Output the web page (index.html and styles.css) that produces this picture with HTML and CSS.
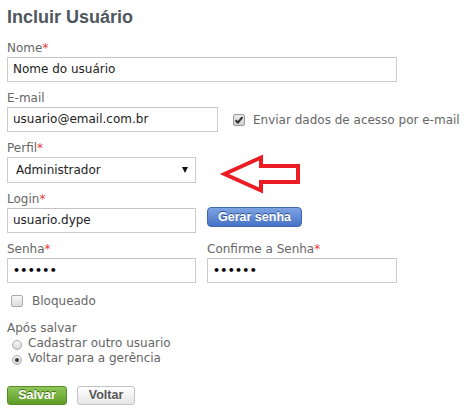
FILE: index.html
```html
<!DOCTYPE html>
<html lang="pt-BR">
<head>
<meta charset="utf-8">
<title>Incluir Usuário</title>
<link rel="stylesheet" href="styles.css">
</head>
<body>
<div class="page">
  <h1 class="title">Incluir Usuário</h1>

  <div class="group">
    <label class="lbl">Nome<span class="req">*</span></label>
    <div class="input w-full">Nome do usuário</div>
  </div>

  <div class="group">
    <label class="lbl">E-mail</label>
    <div class="row">
      <div class="input w-email">usuario@email.com.br</div>
      <label class="check check-email">
        <span class="box checked"><svg viewBox="0 0 12 12" width="12" height="12"><path d="M2.6 6.2 L4.9 8.6 L9.4 3.2" fill="none" stroke="#2b2b2b" stroke-width="2"/></svg></span>
        <span class="check-text">Enviar dados de acesso por e-mail</span>
      </label>
    </div>
  </div>

  <div class="group">
    <label class="lbl">Perfil<span class="req">*</span></label>
    <div class="select w-half">
      <span>Administrador</span>
      <span class="caret"></span>
    </div>
  </div>

  <div class="group">
    <label class="lbl">Login<span class="req">*</span></label>
    <div class="row top">
      <div class="input w-half">usuario.dype</div>
      <button class="btn btn-blue gen">Gerar senha</button>
    </div>
  </div>

  <div class="group row top">
    <div class="col">
      <label class="lbl">Senha<span class="req">*</span></label>
      <div class="input w-half dots">••••••</div>
    </div>
    <div class="col col-right">
      <label class="lbl">Confirme a Senha<span class="req">*</span></label>
      <div class="input w-half2 dots">••••••</div>
    </div>
  </div>

  <label class="check check-block">
    <span class="box"></span>
    <span class="check-text">Bloqueado</span>
  </label>

  <div class="after">
    <div class="after-title">Após salvar</div>
    <label class="radio"><span class="dot"></span><span>Cadastrar outro usuario</span></label>
    <label class="radio"><span class="dot on"></span><span>Voltar para a gerência</span></label>
  </div>

  <div class="actions">
    <button class="btn btn-green">Salvar</button>
    <button class="btn btn-light">Voltar</button>
  </div>

  <svg class="arrow" width="90" height="50" viewBox="215 150 90 50">
    <polygon points="224.5,174 261,157.5 261,166 298,166 298,182 261,182 261,190.5" fill="none" stroke="#ec1c24" stroke-width="4" stroke-linejoin="miter"/>
  </svg>
</div>
</body>
</html>
```

FILE: styles.css
```css
html, body {
  margin: 0;
  padding: 0;
  background: #fff;
}

body {
  font-family: "DejaVu Sans", Verdana, sans-serif;
  font-size: 12px;
  color: #666;
}

.page {
  position: relative;
  padding: 6px 7px;
}

.title {
  margin: 0 0 11px;
  font-family: "Liberation Sans", Arial, sans-serif;
  font-weight: bold;
  font-size: 18px;
  line-height: 22px;
  color: #4f5760;
}

.group {
  margin-bottom: 7px;
}

.lbl {
  display: block;
  line-height: 18px;
  color: #666;
}

.req {
  color: #ee3b3b;
}

.row {
  display: flex;
  align-items: center;
}

.row.top {
  align-items: flex-start;
}

.input {
  box-sizing: border-box;
  height: 25px;
  line-height: 23px;
  border: 1px solid #cccccc;
  border-top-color: #c4c4c4;
  padding: 0 5px;
  color: #222;
  background: #fff;
  white-space: nowrap;
}

.w-full { width: 390px; }
.w-email { width: 211px; }
.w-half { width: 189px; }
.w-half2 { width: 190px; }

.dots {
  font-size: 11px;
  font-weight: bold;
  letter-spacing: 0.3px;
  color: #000;
}

.select {
  box-sizing: border-box;
  height: 26px;
  border: 1px solid #cccccc;
  padding: 0 7px 0 8px;
  display: flex;
  align-items: center;
  justify-content: space-between;
  color: #222;
}

.caret {
  width: 0;
  height: 0;
  border-left: 3.5px solid transparent;
  border-right: 3.5px solid transparent;
  border-top: 6px solid #111;
}

.col-right {
  margin-left: 11px;
}

.check {
  display: flex;
  align-items: center;
  line-height: 18px;
  color: #666;
}

.check-email {
  margin-left: 15px;
}

.check-email .check-text {
  margin-left: 8px;
}

.box {
  box-sizing: border-box;
  width: 12px;
  height: 12px;
  border: 1px solid #a9a9a9;
  border-radius: 2px;
  background: linear-gradient(#f7f7f7, #dcdcdc);
  display: flex;
}

.box svg {
  margin: -1px;
}

.box.checked {
  background: linear-gradient(#ececec, #cfcfcf);
  border-color: #9a9a9a;
}

.check-block {
  margin: 9px 0 0 4px;
}

.check-block .check-text {
  margin-left: 9px;
}

.after {
  margin-top: 11px;
  line-height: 15px;
}

.after-title {
  color: #666;
}

.radio {
  display: flex;
  align-items: center;
  padding-left: 5px;
  color: #666;
}

.dot {
  box-sizing: border-box;
  width: 10px;
  height: 10px;
  margin: 2px 6px 0 0;
  border-radius: 50%;
  border: 1px solid #a9a9a9;
  background: linear-gradient(#f7f7f7, #d8d8d8);
  display: flex;
  align-items: center;
  justify-content: center;
}

.dot.on::after {
  content: "";
  width: 4px;
  height: 4px;
  border-radius: 50%;
  background: #3a3a3a;
}

.actions {
  margin-top: 20px;
  display: flex;
  gap: 10px;
}

.btn {
  box-sizing: border-box;
  height: 19px;
  padding: 0 9px;
  font-family: "Liberation Sans", Arial, sans-serif;
  font-weight: bold;
  font-size: 12.5px;
  line-height: 17px;
  border-radius: 3px;
  cursor: pointer;
}

.btn-blue {
  height: 20px;
  margin-left: 11px;
  margin-top: -1px;
  width: 95px;
  padding: 0;
  color: #fff;
  border: 1px solid #3f68b0;
  background: linear-gradient(#7ea3e3, #4673c6);
  text-shadow: 0 -1px 0 #2e4f8e;
  border-radius: 4px;
}

.btn-green {
  width: 60px;
  padding: 0;
  color: #fff;
  border: 1px solid #5b8c2c;
  background: linear-gradient(#8fc65a, #5d9c25);
  text-shadow: 0 -1px 0 #3f6b16;
}

.btn-light {
  width: 58px;
  padding: 0;
  color: #555;
  border: 1px solid #c4c4c4;
  background: linear-gradient(#ffffff, #e5e5e5);
  text-shadow: 0 1px 0 #fff;
}

.arrow {
  position: absolute;
  left: 215px;
  top: 150px;
}
```
